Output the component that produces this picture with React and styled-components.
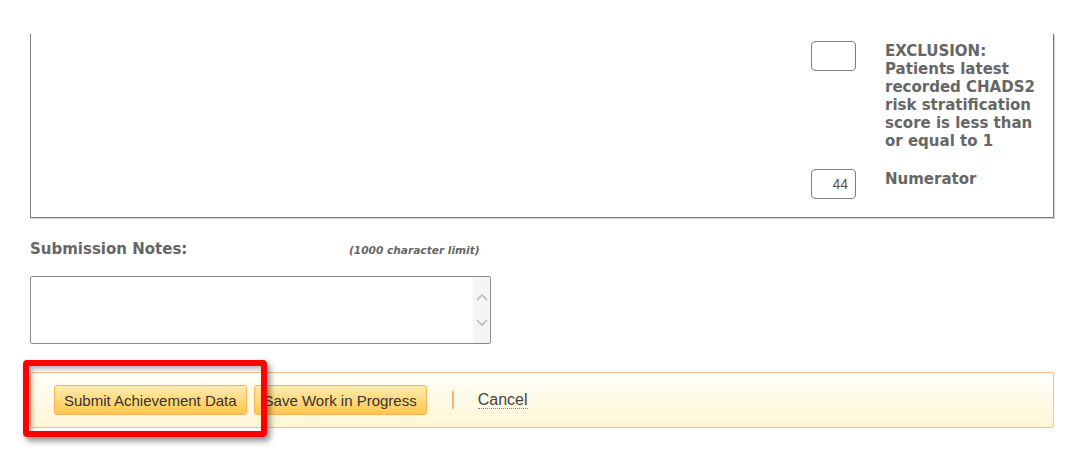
import React from 'react';
import styled, { createGlobalStyle } from 'styled-components';

const GlobalStyle = createGlobalStyle`
  html, body {
    margin: 0;
    padding: 0;
    background: #fff;
  }
`;

const rows = [
  {
    value: '',
    label: 'EXCLUSION: Patients latest recorded CHADS2 risk stratification score is less than or equal to 1',
  },
  { value: '44', label: 'Numerator' },
];

const App = () => {
  return (
    <Page>
      <GlobalStyle />
      <Panel>
        {rows.map((row, index) => (
          <Row key={index}>
            <CountInput defaultValue={row.value} />
            <RowLabel>{row.label}</RowLabel>
          </Row>
        ))}
      </Panel>

      <NotesHeader>
        <NotesLabel>Submission Notes:</NotesLabel>
        <Limit>(1000 character limit)</Limit>
      </NotesHeader>

      <NotesBox>
        <NotesArea />
        <ScrollTrack>
          <svg width="12" height="8" viewBox="0 0 12 8">
            <path d="M1 7 L6 2 L11 7" fill="none" stroke="#bcbcbc" strokeWidth="1.6" />
          </svg>
          <svg width="12" height="8" viewBox="0 0 12 8">
            <path d="M1 1 L6 6 L11 1" fill="none" stroke="#bcbcbc" strokeWidth="1.6" />
          </svg>
        </ScrollTrack>
      </NotesBox>

      <ButtonBar>
        <Highlight />
        <ActionButton>Submit Achievement Data</ActionButton>
        <ActionButton>Save Work in Progress</ActionButton>
        <Separator />
        <CancelLink href="#">Cancel</CancelLink>
      </ButtonBar>
    </Page>
  );
};

export default App;

const Page = styled.div`
  padding: 34px 35px 27px 30px;
  width: 1024px;
  font-family: "DejaVu Sans", Verdana, sans-serif;
`;

const Panel = styled.div`
  border: 1px solid #7d7d7d;
  border-top: none;
  box-shadow: 1px 1px 0 #d2d2d2;
  padding: 7px 0 18px 0;
  display: flex;
  flex-direction: column;
  align-items: flex-end;
  gap: 19px;
`;

const Row = styled.div`
  display: flex;
  align-items: flex-start;
  gap: 29px;
  padding-right: 11px;
`;

const CountInput = styled.input`
  box-sizing: border-box;
  width: 45px;
  height: 30px;
  border: 1px solid #808080;
  border-radius: 4px;
  padding: 0 7px 0 0;
  text-align: right;
  font-family: "Liberation Sans", Arial, sans-serif;
  font-size: 14px;
  color: #555;
  background: #fff;
`;

const RowLabel = styled.div`
  width: 157px;
  font-size: 15px;
  font-weight: bold;
  line-height: 18px;
  color: #666;
  padding-top: 1px;
`;

const NotesHeader = styled.div`
  display: flex;
  align-items: baseline;
  margin-top: 22px;
`;

const NotesLabel = styled.div`
  width: 319px;
  font-size: 15px;
  font-weight: bold;
  color: #666;
  line-height: 18px;
`;

const Limit = styled.div`
  font-size: 10.6px;
  font-weight: bold;
  font-style: italic;
  color: #666;
`;

const NotesBox = styled.div`
  display: flex;
  box-sizing: border-box;
  width: 461px;
  height: 68px;
  margin-top: 18px;
  border: 1px solid #8a8a8a;
  border-radius: 2px;
  background: #fff;
  overflow: hidden;
`;

const NotesArea = styled.textarea`
  flex: 1;
  border: none;
  outline: none;
  resize: none;
  padding: 4px;
  font-family: "Liberation Sans", Arial, sans-serif;
  font-size: 14px;
`;

const ScrollTrack = styled.div`
  width: 17px;
  background: #f5f5f5;
  display: flex;
  flex-direction: column;
  align-items: center;
  justify-content: center;
  gap: 18px;
`;

const ButtonBar = styled.div`
  position: relative;
  box-sizing: border-box;
  height: 56px;
  margin-top: 28px;
  padding: 0 0 0 23px;
  display: flex;
  align-items: center;
  border: 1.5px solid #ffbf7d;
  border-radius: 3px;
  background: linear-gradient(to bottom, #fffefa, #fdf6d4);
`;

const Highlight = styled.div`
  position: absolute;
  left: -8px;
  top: -13px;
  width: 244px;
  height: 77px;
  box-sizing: border-box;
  border: 6px solid #ff0000;
  border-radius: 4px;
  box-shadow: 3px 4px 6px rgba(0, 0, 0, 0.45), inset 3px 3px 5px rgba(0, 0, 0, 0.3);
  pointer-events: none;
`;

const ActionButton = styled.button`
  height: 30px;
  padding: 0 9px;
  margin-right: 7px;
  border: 1px solid #f5b256;
  border-radius: 3px;
  background: linear-gradient(to bottom, #ffecae, #ffc74f);
  font-family: "Liberation Sans", Arial, sans-serif;
  font-size: 15px;
  color: #333;
  cursor: pointer;
`;

const Separator = styled.span`
  width: 2px;
  height: 18px;
  background: #f8b56c;
  margin: 0 24px 0 18px;
`;

const CancelLink = styled.a`
  font-family: "Liberation Sans", Arial, sans-serif;
  font-size: 16px;
  color: #444;
  text-decoration: none;
  border-bottom: 1px dotted #888;
  line-height: 17px;
`;
